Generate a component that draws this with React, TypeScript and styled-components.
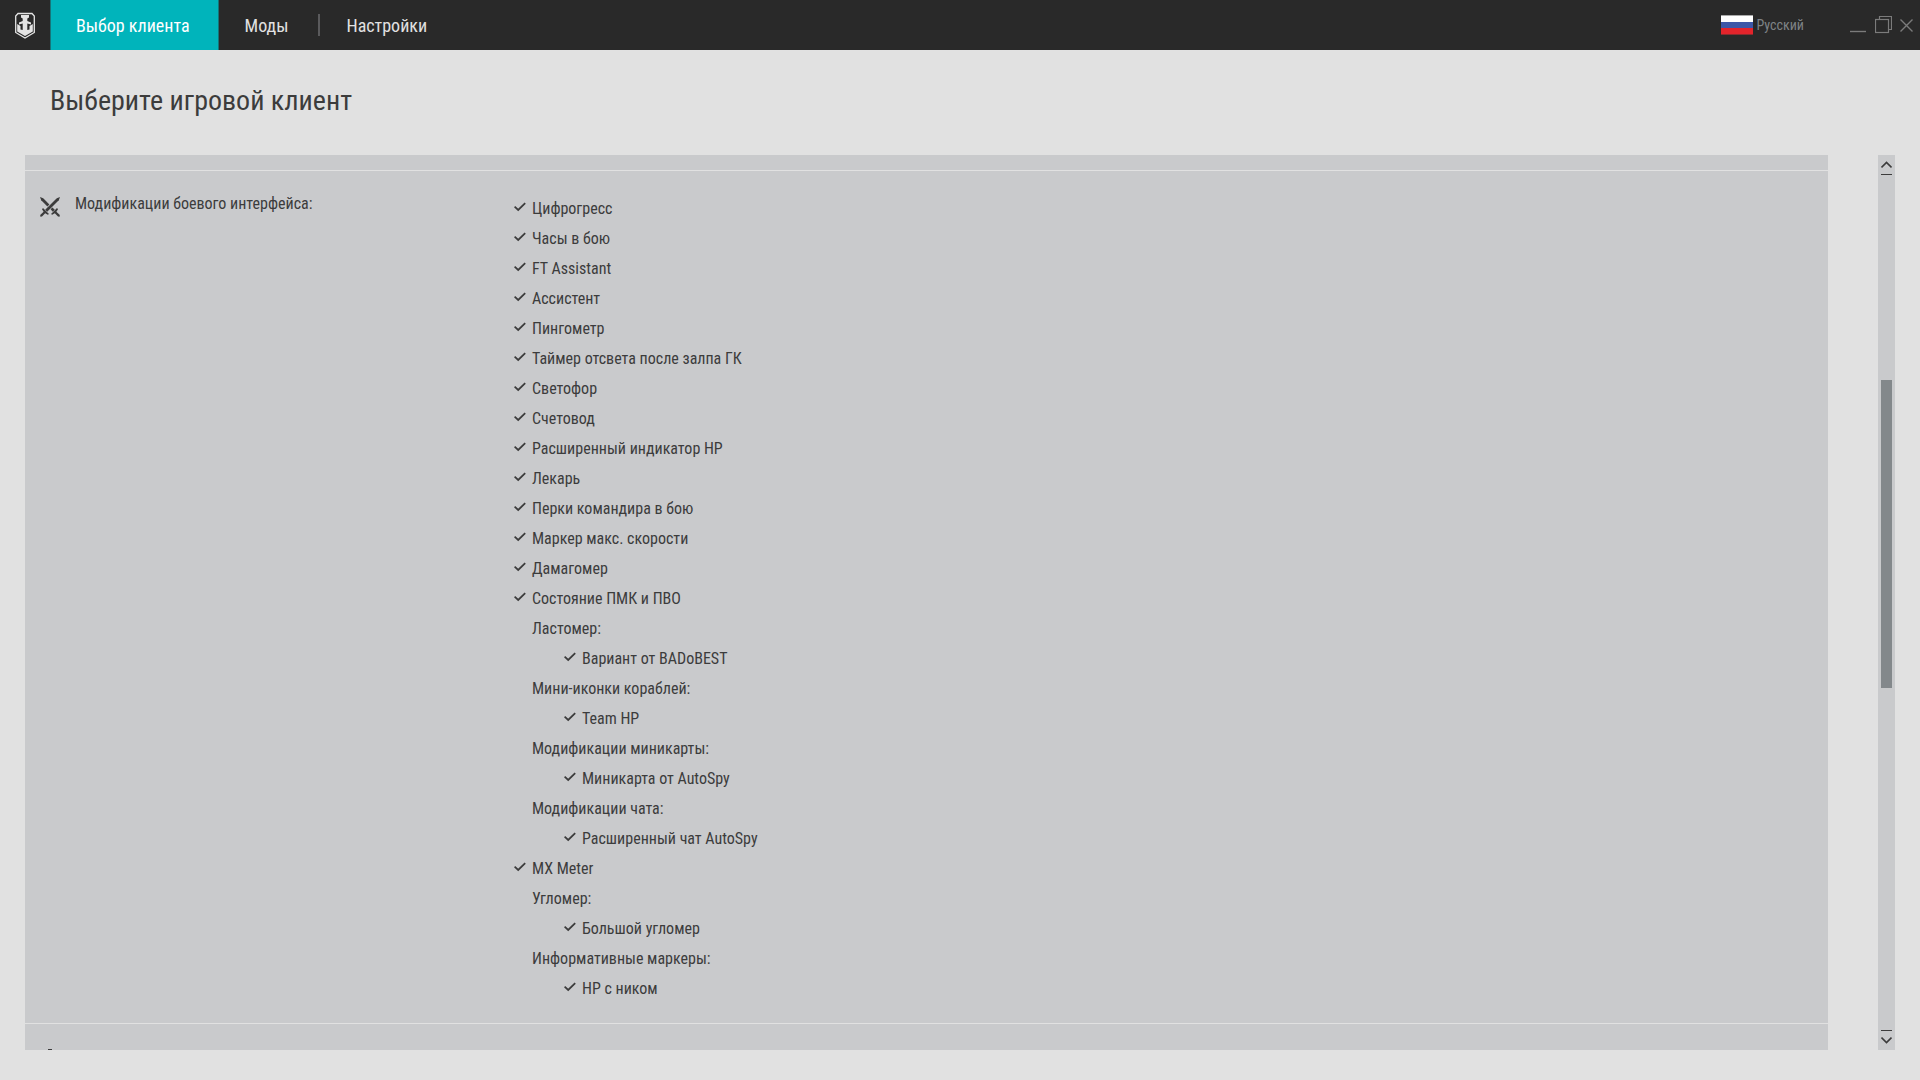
import React from "react";
import styled, { createGlobalStyle } from "styled-components";

const GlobalStyle = createGlobalStyle`
  *, *::before, *::after { box-sizing: border-box; }
  body {
    margin: 0;
    background: #e1e1e1;
    color: #3c3c3c;
    font-family: "Roboto Condensed", "Liberation Sans", sans-serif;
    font-size: 16px;
  }
  button { font: inherit; color: inherit; background: none; border: 0; padding: 0; cursor: pointer; }
  ul { list-style: none; margin: 0; padding: 0; }
  svg { display: block; }
`;

const Window = styled.div`
  display: flex;
  flex-direction: column;
  height: 100vh;
`;

const TopBar = styled.header`
  display: flex;
  align-items: stretch;
  flex: none;
  height: 50px;
  background: #292929;
`;

const Logo = styled.div`
  display: flex;
  align-items: center;
  justify-content: center;
  width: 50px;
`;

const Nav = styled.nav`
  display: flex;
  align-items: center;
  flex: 1;
`;

const NavLink = styled.a<{ $active?: boolean }>`
  display: flex;
  align-items: center;
  height: 50px;
  padding: 0 ${(p) => (p.$active ? 28 : 25)}px 0 25px;
  font-size: 18px;
  text-decoration: none;
  color: ${(p) => (p.$active ? "#fff" : "#e1e1e1")};
  background: ${(p) => (p.$active ? "#00b4bb" : "transparent")};
  border: solid ${(p) => (p.$active ? "#167579" : "transparent")};
  border-width: 0 1px;
`;

const NavDivider = styled.span`
  width: 2px;
  height: 22px;
  margin-left: 4px;
  background: #5a5a5c;
`;

const Language = styled.button`
  display: flex;
  align-items: center;
  gap: 3px;
  margin-right: 45px;
  font-size: 14px;
  color: #7e8386;
`;

const WindowControls = styled.div`
  display: flex;
  align-items: center;
  gap: 8px;
  padding-right: 7px;
  color: #7b7b7b;
`;

const Title = styled.h1`
  margin: 0;
  padding: 31px 50px 34px;
  font-size: 28px;
  line-height: 40px;
  font-weight: 400;
`;

const Main = styled.main`
  display: flex;
  flex: 1;
  min-height: 0;
  gap: 50px;
  padding: 0 25px 30px;
`;

const Panel = styled.div`
  display: flex;
  flex-direction: column;
  flex: 1;
  min-height: 0;
  overflow: hidden;
  background: #c9cacc;
`;

const PreviousCategory = styled.div`
  flex: none;
  height: 15px;
`;

const Category = styled.section`
  display: flex;
  flex: none;
  padding: 22px 15px 20px;
  border-top: 1px solid #e1e1e1;
`;

const NextCategory = styled.section`
  flex: 1;
  min-height: 0;
  padding: 24px 15px 0;
  overflow: hidden;
  border-top: 1px solid #e1e1e1;
`;

const CategoryIcon = styled.div`
  flex: none;
  width: 20px;
  margin: 4px 15px 0 0;
`;

const CategoryName = styled.h2`
  flex: none;
  width: 439px;
  margin: 0;
  font-size: 16px;
  line-height: 22px;
  font-weight: 400;
`;

const ModItem = styled.li<{ $nested?: boolean }>`
  display: flex;
  align-items: center;
  height: 30px;
  padding-left: ${(p) => (p.$nested ? 50 : 0)}px;
`;

const Mark = styled.span`
  flex: none;
  width: 18px;
`;

const ScrollTrack = styled.div`
  display: flex;
  flex-direction: column;
  align-items: center;
  justify-content: space-between;
  flex: none;
  width: 17px;
  background: #c9cacc;
`;

const ScrollRail = styled.div`
  display: flex;
  flex-direction: column;
  flex: 1;
  width: 11px;
`;

const RailSpace = styled.div<{ $grow: number }>`
  flex: ${(p) => p.$grow} 0 0;
`;

const Thumb = styled.div`
  flex: 308 0 0;
  background: #83888b;
`;

const ScrollButton = styled.button`
  display: flex;
  justify-content: center;
  align-items: center;
  width: 17px;
  height: 27px;
`;

type Mod = { name: string; kind: "mod" | "group" | "option" };

const mods: Mod[] = [
  { name: "Цифрогресс", kind: "mod" },
  { name: "Часы в бою", kind: "mod" },
  { name: "FT Assistant", kind: "mod" },
  { name: "Ассистент", kind: "mod" },
  { name: "Пингометр", kind: "mod" },
  { name: "Таймер отсвета после залпа ГК", kind: "mod" },
  { name: "Светофор", kind: "mod" },
  { name: "Счетовод", kind: "mod" },
  { name: "Расширенный индикатор HP", kind: "mod" },
  { name: "Лекарь", kind: "mod" },
  { name: "Перки командира в бою", kind: "mod" },
  { name: "Маркер макс. скорости", kind: "mod" },
  { name: "Дамагомер", kind: "mod" },
  { name: "Состояние ПМК и ПВО", kind: "mod" },
  { name: "Ластомер:", kind: "group" },
  { name: "Вариант от BADoBEST", kind: "option" },
  { name: "Мини-иконки кораблей:", kind: "group" },
  { name: "Team HP", kind: "option" },
  { name: "Модификации миникарты:", kind: "group" },
  { name: "Миникарта от AutoSpy", kind: "option" },
  { name: "Модификации чата:", kind: "group" },
  { name: "Расширенный чат AutoSpy", kind: "option" },
  { name: "MX Meter", kind: "mod" },
  { name: "Угломер:", kind: "group" },
  { name: "Большой угломер", kind: "option" },
  { name: "Информативные маркеры:", kind: "group" },
  { name: "HP с ником", kind: "option" },
];

const ShieldLogo = () => (
  <svg width="20" height="27" viewBox="0 0 20 27" aria-hidden="true">
    <path d="M3 1.5 H17 L19.3 4 V20.5 L10 26 L0.7 20.5 V4 Z" fill="none" stroke="#e4e4e4" strokeWidth="1.3" />
    <path
      d="M6 3 H14 V5.5 L12.3 6.5 V9 L16 10.5 V12.5 L12.3 11.5 V18 L14.5 17.5 V14 L17.8 12 V19.5 L10 24 L2.2 19.5 V12 L5.5 14 V17.5 L7.7 18 V11.5 L4 12.5 V10.5 L7.7 9 V6.5 L6 5.5 Z"
      fill="#e4e4e4"
    />
  </svg>
);

const Flag = () => (
  <svg width="32" height="20" viewBox="0 0 32 20" aria-hidden="true">
    <rect width="32" height="20" fill="#a9a9a9" />
    <rect y="1" width="32" height="6" fill="#fff" />
    <rect y="7" width="32" height="6" fill="#3d57a7" />
    <rect y="13" width="32" height="6" fill="#e3242b" />
    <rect y="19" width="32" height="1" fill="#8b2b2e" />
  </svg>
);

const MinimizeIcon = () => (
  <svg width="18" height="18" viewBox="0 0 18 18" aria-hidden="true">
    <path d="M1 15.5 H17" stroke="currentColor" strokeWidth="1.4" />
  </svg>
);

const RestoreIcon = () => (
  <svg width="17" height="18" viewBox="0 0 17 18" fill="none" stroke="currentColor" strokeWidth="1.2" aria-hidden="true">
    <rect x="0.5" y="3.5" width="13" height="13" />
    <path d="M4.5 3.5 V0.5 H16.5 V13.5 H13.5" />
  </svg>
);

const CloseIcon = () => (
  <svg width="13" height="13" viewBox="0 0 13 13" aria-hidden="true">
    <path d="M0.5 0.5 L12.5 12.5 M12.5 0.5 L0.5 12.5" stroke="currentColor" strokeWidth="1.4" />
  </svg>
);

const SwordsIcon = () => (
  <svg width="20" height="20" viewBox="0 0 20 20" fill="#3c3c3c" aria-hidden="true">
    <path d="M20 0 L18.8 3.2 L7.2 14.8 L5.2 12.8 L16.8 1.2 Z" />
    <path d="M3 11 L9 17 L7.8 17.8 L5.2 16.2 L2 19.6 L0.4 19.8 L0.2 18 L3.6 14.8 L2 12.2 Z" />
    <g transform="matrix(-1 0 0 1 20 0)">
      <path d="M20 0 L18.8 3.2 L12.6 9.4 L10.6 7.4 L16.8 1.2 Z" />
      <path d="M7.6 10.4 L9.4 12.2 L7.2 14.8 L5.2 12.8 Z" />
      <path d="M3 11 L9 17 L7.8 17.8 L5.2 16.2 L2 19.6 L0.4 19.8 L0.2 18 L3.6 14.8 L2 12.2 Z" />
    </g>
  </svg>
);

const AnchorIcon = () => (
  <svg width="20" height="20" viewBox="0 0 20 20" aria-hidden="true">
    <path d="M8 1 H12 V6 L18 14 V20 H2 V14 L8 6 Z" fill="#3c3c3c" />
  </svg>
);

const CheckIcon = () => (
  <svg width="12" height="12" viewBox="0 0 12 12" aria-hidden="true">
    <path d="M0.6 4.6 L4.2 8 L11.2 1.2" fill="none" stroke="#3c3c3c" strokeWidth="1.8" />
  </svg>
);

const ArrowIcon = ({ down }: { down?: boolean }) => (
  <svg width="11" height="15" viewBox="0 0 11 15" fill="none" stroke="#3c3c3c" aria-hidden="true">
    <g transform={down ? "matrix(1 0 0 -1 0 15)" : undefined}>
      <path d="M0.5 6.5 L5.5 1.5 L10.5 6.5" strokeWidth="1.6" />
      <path d="M0 13.5 H11" />
    </g>
  </svg>
);

export default function App() {
  return (
    <Window>
      <GlobalStyle />
      <TopBar>
        <Logo><ShieldLogo /></Logo>
        <Nav>
          <NavLink href="#client" $active aria-current="page">Выбор клиента</NavLink>
          <NavLink href="#mods">Моды</NavLink>
          <NavDivider />
          <NavLink href="#settings">Настройки</NavLink>
        </Nav>
        <Language type="button"><Flag />Русский</Language>
        <WindowControls>
          <button type="button" aria-label="Свернуть"><MinimizeIcon /></button>
          <button type="button" aria-label="Восстановить"><RestoreIcon /></button>
          <button type="button" aria-label="Закрыть"><CloseIcon /></button>
        </WindowControls>
      </TopBar>
      <Title>Выберите игровой клиент</Title>
      <Main>
        <Panel>
          <PreviousCategory />
          <Category>
            <CategoryIcon><SwordsIcon /></CategoryIcon>
            <CategoryName>Модификации боевого интерфейса:</CategoryName>
            <ul>
              {mods.map((mod) => (
                <ModItem key={mod.name} $nested={mod.kind === "option"}>
                  <Mark>{mod.kind !== "group" && <CheckIcon />}</Mark>
                  {mod.name}
                </ModItem>
              ))}
            </ul>
          </Category>
          <NextCategory><AnchorIcon /></NextCategory>
        </Panel>
        <ScrollTrack>
          <ScrollButton type="button" aria-label="Вверх"><ArrowIcon /></ScrollButton>
          <ScrollRail>
            <RailSpace $grow={198} />
            <Thumb />
            <RailSpace $grow={335} />
          </ScrollRail>
          <ScrollButton type="button" aria-label="Вниз"><ArrowIcon down /></ScrollButton>
        </ScrollTrack>
      </Main>
    </Window>
  );
}
